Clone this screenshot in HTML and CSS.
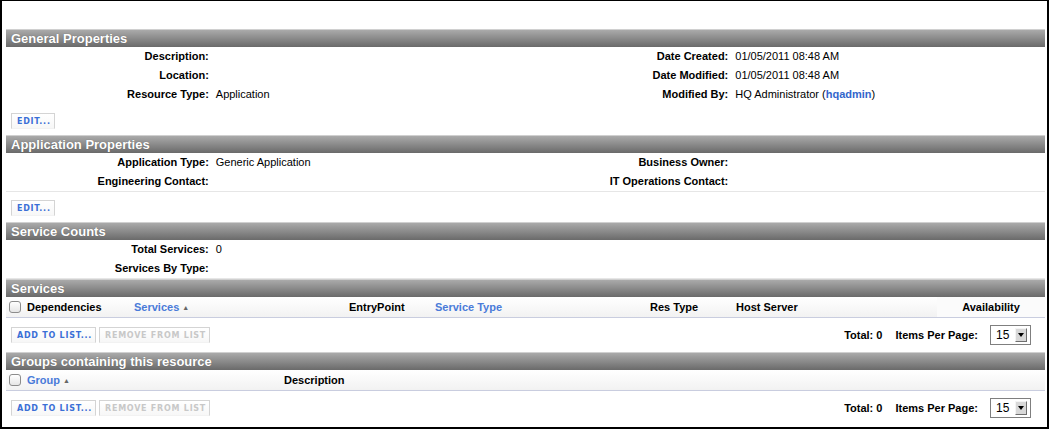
FILE: index.html
```html
<!DOCTYPE html>
<html>
<head>
<meta charset="utf-8">
<link rel="stylesheet" href="styles.css">
</head>
<body>
<div class="frame">
  <section class="sec">
    <div class="hdr">General Properties</div>
    <table class="props">
      <colgroup><col class="c20"><col class="c30"><col class="c20"><col class="c30"></colgroup>
      <tr><th>Description:</th><td></td><th>Date Created:</th><td>01/05/2011 08:48 AM</td></tr>
      <tr><th>Location:</th><td></td><th>Date Modified:</th><td>01/05/2011 08:48 AM</td></tr>
      <tr><th>Resource Type:</th><td>Application</td><th>Modified By:</th><td>HQ Administrator (<a class="link">hqadmin</a>)</td></tr>
    </table>
    <div class="actions"><span class="btn">EDIT...</span></div>
  </section>

  <section class="sec">
    <div class="hdr">Application Properties</div>
    <table class="props lined">
      <colgroup><col class="c20"><col class="c30"><col class="c20"><col class="c30"></colgroup>
      <tr><th>Application Type:</th><td>Generic Application</td><th>Business Owner:</th><td></td></tr>
      <tr><th>Engineering Contact:</th><td></td><th>IT Operations Contact:</th><td></td></tr>
    </table>
    <div class="actions"><span class="btn">EDIT...</span></div>
  </section>

  <section class="sec">
    <div class="hdr">Service Counts</div>
    <table class="props lined">
      <colgroup><col class="c20"><col class="c30"><col class="c20"><col class="c30"></colgroup>
      <tr><th>Total Services:</th><td colspan="3">0</td></tr>
      <tr><th>Services By Type:</th><td colspan="3"></td></tr>
    </table>
  </section>

  <section class="sec">
    <div class="hdr">Services</div>
    <div class="thead">
      <div class="col w-chk"><span class="chk"></span></div>
      <div class="col w-dep">Dependencies</div>
      <div class="col w-svc"><a class="sort">Services</a><span class="arrow">▲</span></div>
      <div class="col w-ep">EntryPoint</div>
      <div class="col w-st"><a class="sort">Service Type</a></div>
      <div class="col w-rt">Res Type</div>
      <div class="col w-hs">Host Server</div>
      <div class="col w-av">Availability</div>
    </div>
    <div class="pager">
      <div class="btns"><span class="btn">ADD TO LIST...</span><span class="btn off">REMOVE FROM LIST</span></div>
      <div class="pinfo">
        <span class="plbl tot">Total: 0</span>
        <span class="plbl ipp">Items Per Page:</span>
        <span class="sel"><span class="selv">15</span><span class="selb"><span class="tri"></span></span></span>
      </div>
    </div>
  </section>

  <section class="sec">
    <div class="hdr">Groups containing this resource</div>
    <div class="thead">
      <div class="col w-chk"><span class="chk"></span></div>
      <div class="col w-grp"><a class="sort">Group</a><span class="arrow">▲</span></div>
      <div class="col w-desc">Description</div>
    </div>
    <div class="pager">
      <div class="btns"><span class="btn">ADD TO LIST...</span><span class="btn off">REMOVE FROM LIST</span></div>
      <div class="pinfo">
        <span class="plbl tot">Total: 0</span>
        <span class="plbl ipp">Items Per Page:</span>
        <span class="sel"><span class="selv">15</span><span class="selb"><span class="tri"></span></span></span>
      </div>
    </div>
  </section>
</div>
</body>
</html>
```

FILE: styles.css
```css
html, body {
  margin: 0;
  padding: 0;
  background: #fff;
}
body {
  font-family: "Liberation Sans", Arial, Helvetica, sans-serif;
  font-size: 11px;
  color: #000;
}
.frame {
  box-sizing: border-box;
  width: 1049px;
  height: 429px;
  border: 2px solid #000;
  border-top-width: 1px;
  padding: 28px 2px 0 4px;
  overflow: hidden;
}
.hdr {
  border-top: 1px solid #d0d0d0;
  height: 17px;
  line-height: 17px;
  background: linear-gradient(#aaaaaa, #6a6a6a);
  color: #fff;
  font-weight: bold;
  font-size: 13px;
  padding-left: 5px;
  text-shadow: 0 0 1px rgba(0,0,0,0.35);
}
.props {
  width: 100%;
  border-collapse: collapse;
  table-layout: fixed;
  border-bottom: 1px solid #fff;
}
.props.lined {
  border-bottom-color: #e6e6e6;
}
.c20 { width: 20%; }
.c30 { width: 30%; }
.props th, .props td {
  padding: 3px 0;
  line-height: 13px;
  height: 13px;
  font-size: 11px;
  vertical-align: top;
  white-space: nowrap;
}
.props th {
  text-align: right;
  font-weight: bold;
  padding-right: 5px;
}
.props td {
  padding-left: 2px;
}
.link {
  color: #3366cc;
  font-weight: bold;
  text-decoration: none;
}
.actions {
  padding: 8px 0 6px 5px;
  display: flex;
}
.btn {
  display: inline-block;
  box-sizing: border-box;
  height: 16px;
  line-height: 15px;
  padding: 0 3px 0 5px;
  border: 1px solid #d4d4d4;
  border-bottom-color: #f2f2f2;
  background: linear-gradient(#ffffff, #f7f7f7);
  font-family: "DejaVu Sans", Verdana, sans-serif;
  font-weight: bold;
  font-size: 8px;
  letter-spacing: 0.75px;
  color: #3a6fd6;
}
.btn.off {
  color: #c8c8c8;
}
.thead {
  display: flex;
  height: 20px;
  line-height: 20px;
  border-bottom: 1px solid #c9cddf;
  background: linear-gradient(#ffffff, #f2f2f2);
  font-weight: bold;
  font-size: 11px;
}
.col {
  box-sizing: border-box;
  white-space: nowrap;
  padding-left: 3px;
}
.w-chk { width: 18px; padding-left: 3px; display: flex; align-items: center; }
.w-dep { width: 107px; }
.w-svc { width: 215px; }
.w-ep { width: 86px; }
.w-st { width: 215px; }
.w-rt { width: 86px; }
.w-hs { width: 204px; }
.w-av { flex: 1; text-align: center; padding-left: 0; background: #fbfbfb; }
.w-grp { width: 257px; }
.w-desc { flex: 1; }
.chk {
  display: block;
  box-sizing: border-box;
  width: 12px;
  height: 12px;
  border: 1px solid #8c8c8c;
  border-radius: 3px;
  background: linear-gradient(#ffffff, #e6e6e6);
}
.sort {
  color: #4a7bd9;
  text-decoration: none;
}
.arrow {
  font-size: 7px;
  color: #666;
  margin-left: 3px;
  vertical-align: 1px;
}
.pager {
  display: flex;
  justify-content: space-between;
  align-items: center;
  padding: 7px 14px 7px 5px;
}
.btns {
  display: flex;
  gap: 3px;
}
.pinfo {
  display: flex;
  align-items: center;
}
.plbl {
  font-weight: bold;
}
.tot { margin-right: 13px; }
.ipp { margin-right: 12px; }
.sel {
  box-sizing: border-box;
  width: 41px;
  height: 20px;
  border: 1px solid #7f7f7f;
  display: flex;
  align-items: center;
  justify-content: space-between;
  padding: 0 3px 0 5px;
  font-size: 12px;
}
.selb {
  box-sizing: border-box;
  width: 12px;
  height: 14px;
  border: 1px solid;
  border-color: #f4f4f4 #6e6e6e #6e6e6e #f4f4f4;
  background: #d8d8d8;
  display: flex;
  align-items: center;
  justify-content: center;
}
.tri {
  width: 0;
  height: 0;
  border-left: 3px solid transparent;
  border-right: 3px solid transparent;
  border-top: 4px solid #000;
}
```
